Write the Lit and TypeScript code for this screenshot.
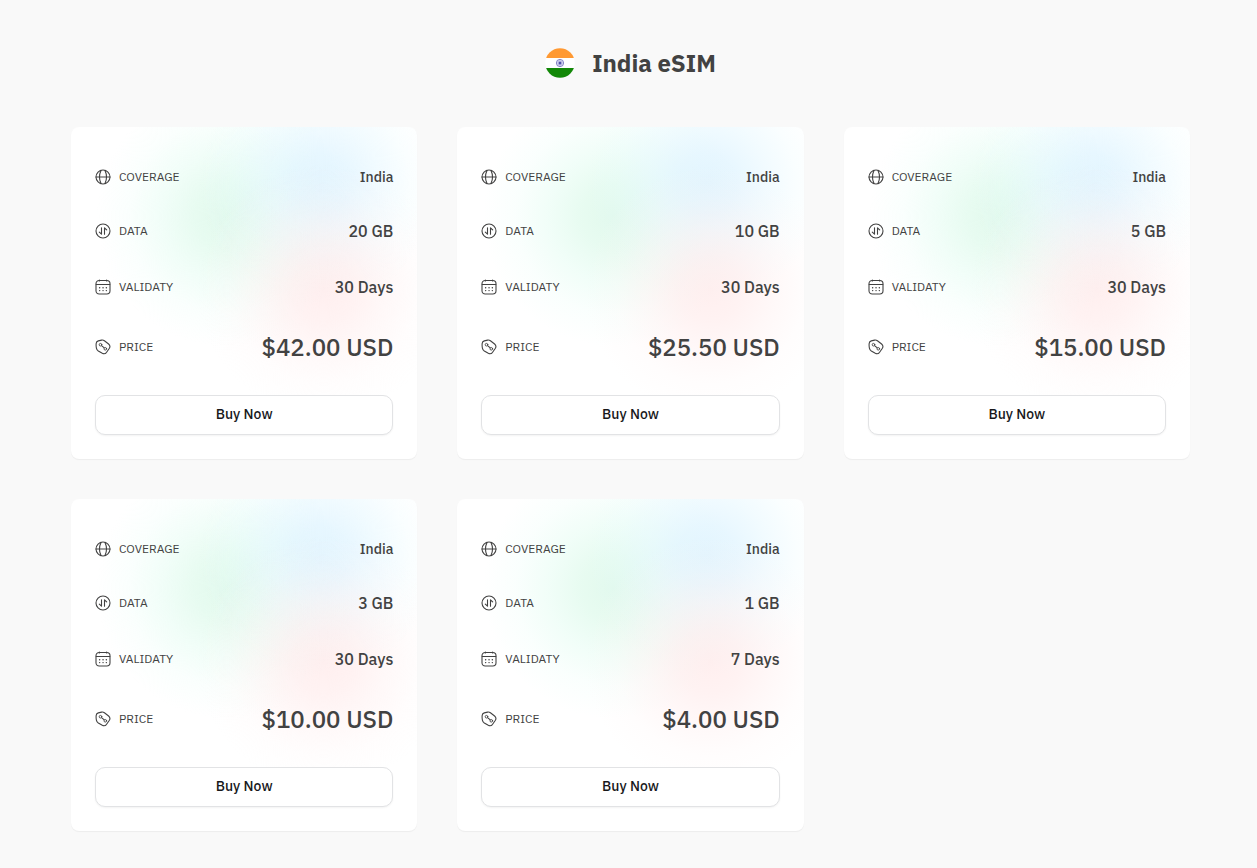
import { LitElement, html, css, svg } from "lit";
import { customElement, property } from "lit/decorators.js";

interface Plan {
  data: string;
  validity: string;
  price: string;
}

const PLANS: Plan[] = [
  { data: "20 GB", validity: "30 Days", price: "$42.00 USD" },
  { data: "10 GB", validity: "30 Days", price: "$25.50 USD" },
  { data: "5 GB", validity: "30 Days", price: "$15.00 USD" },
  { data: "3 GB", validity: "30 Days", price: "$10.00 USD" },
  { data: "1 GB", validity: "7 Days", price: "$4.00 USD" },
];

const globe = svg`
  <circle cx="8" cy="8" r="7" />
  <path d="M6 1.4C4.1 5.5 4.1 10.5 6 14.6M10 1.4C11.9 5.5 11.9 10.5 10 14.6M1 8h14" />`;

const transfer = svg`
  <circle cx="8" cy="8" r="7" />
  <path d="M6.5 4.8v6.4L4.3 9.2M9.5 11.2V4.8l2.2 2" />`;

const calendar = svg`
  <rect x="1" y="1.5" width="14" height="13.5" rx="3.2" />
  <path d="M1.2 5.5h13.6M4.4 1v1M11.6 1v1" />
  <path d="M4.6 8.7h.1M8 8.7h.1M11.3 8.7h.1M4.6 11.6h.1M8 11.6h.1M11.3 11.6h.1" stroke-width="1.4" />`;

const tag = svg`
  <path d="M1.2 4.4Q1.4 2.4 3.3 1.9L6.6 1.1Q8.1 .8 9.4 1.8L13.6 5Q15.8 7 14.4 9.3L11.6 13.3Q9.8 15.6 7.3 14.3L3.3 12Q1.7 11 1.4 9.2Q.9 6.6 1.2 4.4Z" />
  <circle cx="5.5" cy="5.7" r="1.3" stroke-width=".9" />
  <circle cx="10.3" cy="9.8" r="1.3" stroke-width=".9" />
  <path d="M6.8 6.8l2.2 1.9" />`;

@customElement("plan-card")
export class PlanCard extends LitElement {
  @property({ attribute: false }) plan!: Plan;

  static styles = css`
    :host {
      display: block;
    }
    .card {
      padding: 24px;
      border-radius: 8px;
      background:
        radial-gradient(circle 125px at 73% 49%, rgba(255, 232, 232, 0.7) 0, rgba(255, 233, 233, 0.58) 25%, rgba(255, 236, 236, 0.36) 50%, rgba(255, 240, 240, 0.14) 75%, rgba(255, 244, 244, 0) 100%),
        radial-gradient(circle 120px at 72% 17%, rgba(220, 242, 254, 0.8) 0, rgba(221, 243, 255, 0.68) 25%, rgba(224, 246, 255, 0.44) 50%, rgba(226, 250, 255, 0.18) 75%, rgba(230, 252, 255, 0) 100%),
        radial-gradient(circle 130px at 45% 27%, rgba(216, 247, 230, 0.74) 0, rgba(217, 249, 232, 0.62) 25%, rgba(220, 252, 238, 0.4) 50%, rgba(224, 254, 244, 0.16) 75%, rgba(230, 255, 248, 0) 100%),
        #fff;
      box-shadow: 0 1px 1px rgba(0, 0, 0, 0.05);
    }
    .facts {
      margin: 0 0 16px;
    }
    .row {
      display: flex;
      align-items: center;
      justify-content: space-between;
      padding: 16px 0;
    }
    .label {
      display: flex;
      align-items: center;
      gap: 8px;
      font-size: 12px;
      line-height: 16px;
      text-transform: uppercase;
    }
    .icon {
      width: 16px;
      height: 16px;
      fill: none;
      stroke: currentColor;
      stroke-width: 1.1;
      stroke-linecap: round;
      stroke-linejoin: round;
    }
    .value {
      margin: 0;
      font-weight: 500;
      white-space: nowrap;
    }
    .small {
      font-size: 14px;
      line-height: 20px;
    }
    .medium {
      font-size: 16px;
      line-height: 24px;
    }
    .large {
      font-size: 24px;
      line-height: 32px;
    }
    .buy {
      display: block;
      width: 100%;
      height: 40px;
      padding: 0 16px 2px;
      border: 1px solid #e2e3e5;
      border-radius: 10px;
      background: #fff;
      color: #18181b;
      font: 500 14px/20px var(--sans);
      box-shadow: 0 1px 2px rgba(0, 0, 0, 0.05);
      cursor: pointer;
    }
  `;

  private row(icon: unknown, label: string, value: string, size: string) {
    return html`<div class="row">
      <dt class="label">
        <svg class="icon" viewBox="0 0 16 16" aria-hidden="true">${icon}</svg>
        ${label}
      </dt>
      <dd class="value ${size}">${value}</dd>
    </div>`;
  }

  render() {
    const { data, validity, price } = this.plan;
    return html`<article class="card">
      <dl class="facts">
        ${this.row(globe, "Coverage", "India", "small")}
        ${this.row(transfer, "Data", data, "medium")}
        ${this.row(calendar, "Validaty", validity, "medium")}
        ${this.row(tag, "Price", price, "large")}
      </dl>
      <button class="buy" type="button">Buy Now</button>
    </article>`;
  }
}

@customElement("app-root")
export class AppRoot extends LitElement {
  static styles = css`
    :host {
      --sans: "IBM Plex Sans", "Noto Sans", sans-serif;
      display: block;
      box-sizing: border-box;
      min-height: 100vh;
      padding: 47px 67px 36px 71px;
      background: #f9f9f9;
      color: #424242;
      font-family: var(--sans);
    }
    .heading {
      display: flex;
      align-items: center;
      justify-content: center;
      gap: 17px;
      margin-bottom: 48px;
    }
    .flag {
      width: 30px;
      height: 30px;
    }
    .title {
      margin: 0;
      font-size: 24px;
      line-height: 32px;
      font-weight: 700;
    }
    .plans {
      display: grid;
      grid-template-columns: repeat(auto-fill, minmax(min(320px, 100%), 1fr));
      gap: 40px;
    }
  `;

  render() {
    return html`
      <header class="heading">
        <svg class="flag" viewBox="0 0 30 30" role="img" aria-label="Flag of India">
          <clipPath id="round"><circle cx="15" cy="15" r="14.7" /></clipPath>
          <g clip-path="url(#round)">
            <path fill="#fff" d="M0 0h30v30H0z" />
            <path fill="#ff9933" d="M0 0h30v10H0z" />
            <path fill="#128807" d="M0 20h30v10H0z" />
          </g>
          <circle cx="15" cy="15" r="3.6" fill="#e4e4f6" stroke="#7474bc" stroke-width=".9" />
          <path d="M15 11.6v6.8M11.6 15h6.8M12.6 12.6l4.8 4.8M17.4 12.6l-4.8 4.8" stroke="#8c8ccc" stroke-width=".4" />
          <circle cx="15" cy="15" r="1.5" fill="#5050a8" />
        </svg>
        <h1 class="title">India eSIM</h1>
      </header>
      <main class="plans">
        ${PLANS.map((plan) => html`<plan-card .plan=${plan}></plan-card>`)}
      </main>
    `;
  }
}
